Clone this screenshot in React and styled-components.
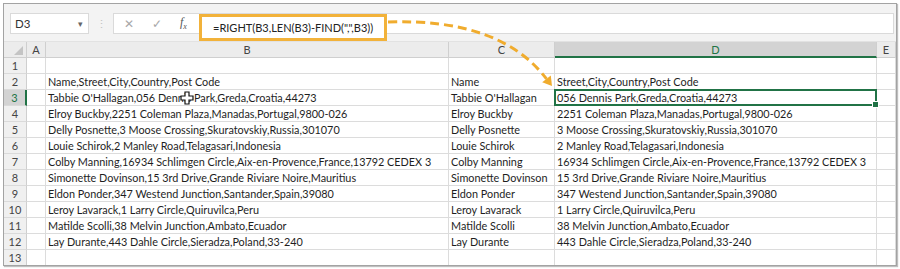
import React from "react";
import styled, { createGlobalStyle } from "styled-components";

const GlobalStyle = createGlobalStyle`
  html, body {
    margin: 0;
    padding: 0;
    background: #ffffff;
  }
  body {
    font-family: Lato, "Liberation Sans", sans-serif;
  }
`;

const rows = [
  ["Name,Street,City,Country,Post Code", "Name", "Street,City,Country,Post Code"],
  ["Tabbie O'Hallagan,056 Dennis Park,Greda,Croatia,44273", "Tabbie O'Hallagan", "056 Dennis Park,Greda,Croatia,44273"],
  ["Elroy Buckby,2251 Coleman Plaza,Manadas,Portugal,9800-026", "Elroy Buckby", "2251 Coleman Plaza,Manadas,Portugal,9800-026"],
  ["Delly Posnette,3 Moose Crossing,Skuratovskiy,Russia,301070", "Delly Posnette", "3 Moose Crossing,Skuratovskiy,Russia,301070"],
  ["Louie Schirok,2 Manley Road,Telagasari,Indonesia", "Louie Schirok", "2 Manley Road,Telagasari,Indonesia"],
  ["Colby Manning,16934 Schlimgen Circle,Aix-en-Provence,France,13792 CEDEX 3", "Colby Manning", "16934 Schlimgen Circle,Aix-en-Provence,France,13792 CEDEX 3"],
  ["Simonette Dovinson,15 3rd Drive,Grande Riviare Noire,Mauritius", "Simonette Dovinson", "15 3rd Drive,Grande Riviare Noire,Mauritius"],
  ["Eldon Ponder,347 Westend Junction,Santander,Spain,39080", "Eldon Ponder", "347 Westend Junction,Santander,Spain,39080"],
  ["Leroy Lavarack,1 Larry Circle,Quiruvilca,Peru", "Leroy Lavarack", "1 Larry Circle,Quiruvilca,Peru"],
  ["Matilde Scolli,38 Melvin Junction,Ambato,Ecuador", "Matilde Scolli", "38 Melvin Junction,Ambato,Ecuador"],
  ["Lay Durante,443 Dahle Circle,Sieradza,Poland,33-240", "Lay Durante", "443 Dahle Circle,Sieradza,Poland,33-240"],
];

const columns = ["A", "B", "C", "D", "E"];
const activeRow = 3;
const activeCol = "D";

export default function App() {
  const allRows = [null, ...rows, null];
  return (
    <Page>
      <GlobalStyle />
      <Window>
        <Toolbar>
          <NameBox>
            <span>D3</span>
            <Caret>▾</Caret>
          </NameBox>
          <Grip>⋮</Grip>
          <FxGroup>
            <FxIcon>✕</FxIcon>
            <FxIcon>✓</FxIcon>
            <FxLabel>
              f<sub>x</sub>
            </FxLabel>
          </FxGroup>
          <FormulaField />
        </Toolbar>

        <Sheet>
          <Corner>
            <svg width="9" height="9" viewBox="0 0 9 9">
              <polygon points="9,0 9,9 0,9" fill="#c4c4c4" />
            </svg>
          </Corner>
          {columns.map((c) => (
            <ColHead key={c} $active={c === activeCol}>
              {c}
            </ColHead>
          ))}

          {allRows.map((r, i) => {
            const n = i + 1;
            return (
              <React.Fragment key={n}>
                <RowHead $active={n === activeRow}>{n}</RowHead>
                <Cell />
                <Cell>{r ? r[0] : ""}</Cell>
                <Cell>{r ? r[1] : ""}</Cell>
                <Cell $selected={n === activeRow}>{r ? r[2] : ""}</Cell>
                <Cell />
              </React.Fragment>
            );
          })}
        </Sheet>
      </Window>

      <Callout>=RIGHT(B3,LEN(B3)-FIND(",",B3))</Callout>

      <Overlay width="900" height="269" viewBox="0 0 900 269">
        <path
          d="M388 22 Q 500 18 546.5 78.9"
          fill="none"
          stroke="#f0ac2e"
          strokeWidth="3"
          strokeDasharray="9 5"
        />
        <polygon points="552,86 542.2,82.3 550.8,75.5" fill="#f0ac2e" />
        <path
          d="M185 92 h4 v4 h4 v4 h-4 v4 h-4 v-4 h-4 v-4 h4 z"
          fill="#ffffff"
          stroke="#111111"
          strokeWidth="1.2"
        />
      </Overlay>
    </Page>
  );
}

const Page = styled.div`
  position: relative;
  width: 900px;
  height: 269px;
  padding: 3px 0 0 3px;
  box-sizing: border-box;
  overflow: hidden;
`;

const Window = styled.div`
  width: 894px;
  height: 263px;
  box-sizing: border-box;
  border: 1px solid #a3a3a3;
  box-shadow: 1px 1px 1px rgba(0, 0, 0, 0.25);
  overflow: hidden;
  background: #ffffff;
`;

const Toolbar = styled.div`
  display: flex;
  align-items: flex-start;
  height: 38px;
  padding: 9px 0 0 6px;
  box-sizing: border-box;
  background: #f3f3f3;
  border-bottom: 1px solid #e2e2e2;
`;

const NameBox = styled.div`
  display: flex;
  align-items: center;
  justify-content: space-between;
  width: 79px;
  height: 21px;
  box-sizing: border-box;
  padding: 0 5px 0 4px;
  background: #ffffff;
  border: 1px solid #dadada;
  font-size: 11.5px;
  color: #333333;
`;

const Caret = styled.span`
  font-size: 9px;
  color: #666666;
`;

const Grip = styled.div`
  width: 24px;
  height: 21px;
  line-height: 21px;
  text-align: center;
  font-size: 11px;
  color: #c2c2c2;
`;

const FxGroup = styled.div`
  display: flex;
  align-items: center;
  width: 87px;
  height: 21px;
  box-sizing: border-box;
  padding-left: 10px;
  background: #ffffff;
  border: 1px solid #dadada;
  border-right: none;
`;

const FxIcon = styled.span`
  width: 28px;
  font-size: 12px;
  color: #a8a8a8;
  text-align: left;
`;

const FxLabel = styled.span`
  font-family: "Liberation Serif", serif;
  font-style: italic;
  font-size: 12px;
  color: #555555;
  sub {
    font-size: 8px;
  }
`;

const FormulaField = styled.div`
  flex: 1;
  height: 21px;
  margin-right: 2px;
  box-sizing: border-box;
  background: #ffffff;
  border: 1px solid #dadada;
`;

const Callout = styled.div`
  position: absolute;
  left: 199px;
  top: 14px;
  width: 188px;
  height: 27px;
  box-sizing: border-box;
  border: 3px solid #f2b23a;
  background: #ffffff;
  padding-left: 11px;
  line-height: 21px;
  font-size: 11px;
  color: #222222;
  white-space: nowrap;
`;

const Overlay = styled.svg`
  position: absolute;
  left: 0;
  top: 0;
  pointer-events: none;
`;

const Sheet = styled.div`
  display: grid;
  grid-template-columns: 23px 19px 403px 106px 322px 1fr;
  grid-template-rows: 16px;
  grid-auto-rows: 16px;
  font-size: 10.85px;
  color: #1e1e1e;
`;

const HeadBase = styled.div`
  display: flex;
  align-items: center;
  justify-content: center;
  box-sizing: border-box;
  border-right: 1px solid #cfcfcf;
  border-bottom: 1px solid #cfcfcf;
  font-size: 11px;
`;

const Corner = styled(HeadBase)`
  justify-content: flex-end;
  align-items: flex-end;
  padding: 0 3px 2px 0;
  background: #ececec;
`;

const ColHead = styled(HeadBase)`
  background: ${(p) => (p.$active ? "#d3d3d3" : "#ececec")};
  color: ${(p) => (p.$active ? "#217346" : "#444444")};
  border-bottom: ${(p) => (p.$active ? "2px solid #217346" : "1px solid #cfcfcf")};
`;

const RowHead = styled(HeadBase)`
  background: ${(p) => (p.$active ? "#d3d3d3" : "#f0f0f0")};
  color: ${(p) => (p.$active ? "#217346" : "#444444")};
  border-right: ${(p) => (p.$active ? "2px solid #217346" : "1px solid #cfcfcf")};
  border-bottom: 1px solid #dadada;
`;

const Cell = styled.div`
  position: relative;
  box-sizing: border-box;
  padding: 0 2px;
  line-height: 15px;
  white-space: nowrap;
  border-right: 1px solid #dcdcdc;
  border-bottom: 1px solid #dcdcdc;

  ${(p) =>
    p.$selected &&
    `
    &::after {
      content: "";
      position: absolute;
      left: -1px;
      top: -1px;
      right: -1px;
      bottom: -1px;
      border: 2px solid #217346;
    }
    &::before {
      content: "";
      position: absolute;
      right: -3px;
      bottom: -3px;
      width: 5px;
      height: 5px;
      background: #217346;
      border: 1px solid #ffffff;
      z-index: 1;
    }
  `}
`;
